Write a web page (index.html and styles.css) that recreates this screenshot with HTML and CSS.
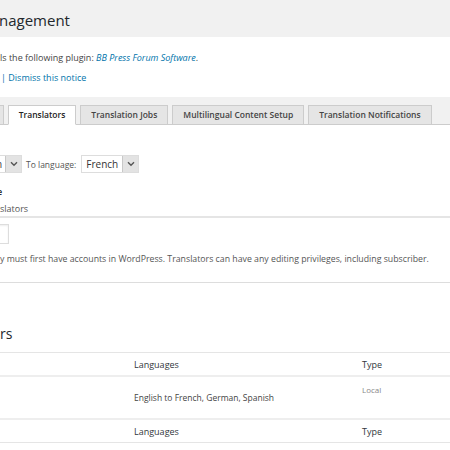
FILE: index.html
```html
<!DOCTYPE html>
<html lang="en">
  <head>
    <meta charset="UTF-8" />
    <title>Translation Management</title>
    <link rel="stylesheet" href="styles.css">
  </head>
  <body>
    <div class="page-head">
      <h1>nagement</h1>
    </div>

    <div class="notice">
      <p>ls the following plugin: <a class="plugin" href="#">BB Press Forum Software</a>.</p>
      <p class="notice-links"><span class="sep">|</span> <a href="#">Dismiss this notice</a></p>
    </div>

    <div class="tabs">
      <a class="tab tab-cut" href="#">Languages</a>
      <a class="tab active" href="#">Translators</a>
      <a class="tab" href="#">Translation Jobs</a>
      <a class="tab" href="#">Multilingual Content Setup</a>
      <a class="tab" href="#">Translation Notifications</a>
    </div>

    <div class="content">
      <div class="lang-filter">
        <div class="select select-cut">
          <span class="select-value">English</span>
          <span class="select-arrow">
            <svg width="8" height="6" viewBox="0 0 8 6"><path d="M1 1.2l3 3 3-3" fill="none" stroke="#555" stroke-width="1.4"/></svg>
          </span>
        </div>
        <span class="filter-label">To language:</span>
        <div class="select">
          <span class="select-value">French</span>
          <span class="select-arrow">
            <svg width="8" height="6" viewBox="0 0 8 6"><path d="M1 1.2l3 3 3-3" fill="none" stroke="#555" stroke-width="1.4"/></svg>
          </span>
        </div>
      </div>

      <div class="field-title">e</div>
      <div class="field-label">slators</div>
      <div class="field-line"></div>
      <div class="search-box"></div>
      <p class="hint">y must first have accounts in WordPress. Translators can have any editing privileges, including subscriber.</p>
      <div class="section-line"></div>

      <h2>rs</h2>

      <table class="translators">
        <thead>
          <tr>
            <th class="col-name"></th>
            <th class="col-langs">Languages</th>
            <th>Type</th>
          </tr>
        </thead>
        <tbody>
          <tr>
            <td class="col-name"></td>
            <td class="col-langs">English to French, German, Spanish</td>
            <td class="type">Local</td>
          </tr>
        </tbody>
        <tfoot>
          <tr>
            <th class="col-name"></th>
            <th class="col-langs">Languages</th>
            <th>Type</th>
          </tr>
        </tfoot>
      </table>
    </div>
  </body>
</html>
```

FILE: styles.css
```css
body {
  margin: 0;
  width: 450px;
  overflow: hidden;
  background: #fff;
  font-family: "Open Sans", "DejaVu Sans", sans-serif;
  color: #444;
}
a {
  color: #0073aa;
  text-decoration: none;
}
.page-head {
  height: 37px;
  background: #f1f1f1;
}
.page-head h1 {
  margin: 0 0 0 -1px;
  padding-top: 10px;
  font-size: 15px;
  line-height: 20px;
  font-weight: 400;
  color: #23282d;
}
.notice {
  height: 45px;
  padding-top: 15px;
  background: #fff;
}
.notice p {
  margin: 0;
  font-size: 9px;
  line-height: 12px;
  white-space: nowrap;
}
.notice .plugin {
  font-style: italic;
}
.notice-links {
  margin-top: 8px !important;
}
.notice-links .sep {
  color: #0073aa;
  margin-left: 1px;
}
.tabs {
  display: flex;
  gap: 4px;
  padding-top: 8px;
  background: #f1f1f1;
  border-bottom: 1px solid #ccc;
  white-space: nowrap;
}
.tab {
  margin-bottom: -1px;
  padding: 0 10px;
  border: 1px solid #ccc;
  background: #e5e5e5;
  color: #444;
  font-size: 8.5px;
  font-weight: 600;
  line-height: 18px;
}
.tab.active {
  background: #fff;
  border-bottom-color: #fff;
  color: #222;
}
.tab-cut {
  margin-left: -62px;
}
.lang-filter {
  display: flex;
  align-items: center;
  gap: 4px;
  margin-top: 30px;
}
.select {
  display: flex;
  width: 56px;
  height: 16px;
  border: 1px solid #ddd;
  background: #fff;
  color: #333;
}
.select-value {
  flex: 1;
  padding-left: 4px;
  font-size: 10px;
  line-height: 16px;
}
.select-arrow {
  display: flex;
  align-items: center;
  justify-content: center;
  width: 15px;
  background: #e3e3e3;
  border-left: 1px solid #c8c8c8;
}
.select-cut {
  margin-left: -36px;
}
.filter-label {
  font-size: 8.5px;
  color: #555;
  margin-right: 1px;
}
.field-title {
  margin-top: 13px;
  margin-left: -3px;
  font-size: 9px;
  line-height: 12px;
  font-weight: 600;
  color: #23282d;
}
.field-label {
  margin-top: 5px;
  font-size: 9px;
  line-height: 12px;
  color: #555;
}
.field-line {
  margin-top: 1px;
  height: 2px;
  background: #e5e5e5;
}
.search-box {
  width: 38px;
  height: 18px;
  margin-top: 6px;
  margin-left: -31px;
  border: 1px solid #ddd;
  box-shadow: inset 0 1px 2px rgba(0, 0, 0, 0.07);
}
.hint {
  margin: 9px 0 0;
  font-size: 8.75px;
  line-height: 12px;
  color: #555;
  white-space: nowrap;
}
.section-line {
  margin-top: 17px;
  height: 1px;
  background: #ddd;
}
h2 {
  margin: 42px 0 0;
  font-size: 14px;
  line-height: 18px;
  font-weight: 400;
  color: #23282d;
}
.translators {
  width: 100%;
  margin-top: 9px;
  border-collapse: collapse;
  table-layout: fixed;
}
.translators th,
.translators td {
  padding: 0 8px;
  text-align: left;
  font-weight: 400;
}
.translators thead th {
  height: 22px;
  border-top: 1px solid #e5e5e5;
  border-bottom: 2px solid #eee;
  font-size: 9px;
  color: #32373c;
}
.translators tbody td {
  height: 34px;
  border-bottom: 2px solid #eee;
  font-size: 8.5px;
  color: #444;
}
.translators td.type {
  vertical-align: top;
  padding-top: 7px;
  font-size: 8px;
  color: #888;
}
.translators tfoot th {
  height: 22px;
  border-bottom: 1px solid #e5e5e5;
  font-size: 9px;
  color: #32373c;
}
.col-name {
  width: 110px;
}
.col-langs {
  width: 212px;
}
```
